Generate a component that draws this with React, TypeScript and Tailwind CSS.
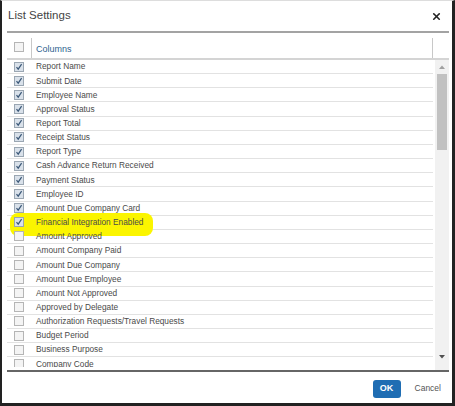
import { X } from "lucide-react";

const columns: [string, boolean][] = [
  ["Report Name", true],
  ["Submit Date", true],
  ["Employee Name", true],
  ["Approval Status", true],
  ["Report Total", true],
  ["Receipt Status", true],
  ["Report Type", true],
  ["Cash Advance Return Received", true],
  ["Payment Status", true],
  ["Employee ID", true],
  ["Amount Due Company Card", true],
  ["Financial Integration Enabled", true],
  ["Amount Approved", false],
  ["Amount Company Paid", false],
  ["Amount Due Company", false],
  ["Amount Due Employee", false],
  ["Amount Not Approved", false],
  ["Approved by Delegate", false],
  ["Authorization Requests/Travel Requests", false],
  ["Budget Period", false],
  ["Business Purpose", false],
  ["Company Code", false],
];

function Box({ checked }: { checked: boolean }) {
  return (
    <span
      className={
        checked
          ? "flex h-[10px] w-[10px] items-center justify-center border border-[#9aa6b2] bg-[#d9e1ea]"
          : "flex h-[10px] w-[10px] items-center justify-center border border-[#b5b5b5] bg-[#f4f4f4]"
      }
    >
      {checked && (
        <svg width="8" height="8" viewBox="0 0 8 8">
          <path d="M1.5 4.2 L3.2 6.2 L6.6 1.2" fill="none" stroke="#3b5878" strokeWidth="1.2" />
        </svg>
      )}
    </span>
  );
}

export default function App() {
  return (
    <div
      className="relative flex h-[406px] w-[455px] flex-col overflow-hidden border-b-[3px] border-l-[2px] border-r-[3px] border-t border-b-[#222] border-l-[#222] border-r-[#222] border-t-[#ddd] bg-white text-[#333]"
      style={{ fontFamily: "Arial, 'Liberation Sans', sans-serif" }}
    >
      <div className="flex h-[30px] items-center justify-between pl-[6px] pr-[10px]">
        <span className="text-[11.5px] text-[#444]">List Settings</span>
        <X size={11} strokeWidth={3.5} className="text-[#222]" />
      </div>
      <div className="ml-[5px] mr-[3px] h-[2px] bg-[#a3a3a3]" />

      <div className="ml-[5px] mr-[3px] mt-[5px] flex flex-1 flex-col">
        <div className="flex h-[22px] border-b-2 border-[#d4d4d4]">
          <div className="flex w-[24px] items-start justify-center pt-[4px]">
            <Box checked={false} />
          </div>
          <div className="flex flex-1 items-end border-l border-r border-[#c8c8c8] pb-[2px] pl-[4px]">
            <span className="text-[9px] text-[#2f5f8f]">Columns</span>
          </div>
          <div className="w-[16px]" />
        </div>

        <div className="relative flex h-[312px] border-b-2 border-[#666]">
          <div className="mb-[3px] flex-1 overflow-hidden">
            {columns.map(([name, checked]) => (
              <div
                key={name}
                className="relative flex h-[14.17px] items-center border-b border-[#e2e2e2]"
              >
                {name === "Financial Integration Enabled" && (
                  <div className="absolute left-[3px] top-[-3px] h-[23px] w-[143px] rounded-[8px] bg-[#fbf500]" />
                )}
                <div className="relative flex w-[24px] justify-center">
                  <Box checked={checked} />
                </div>
                <span className="relative pl-[5px] text-[8.3px] text-[#4a4a4a]">{name}</span>
              </div>
            ))}
          </div>
          <div className="ml-[2px] flex w-[14px] flex-col items-center bg-[#f1f1f1]">
            <svg width="8" height="6" viewBox="0 0 8 6" className="mt-[4px]">
              <path d="M1 5 L4 1.5 L7 5 Z" fill="#a0a0a0" />
            </svg>
            <div className="mt-[4px] h-[76px] w-[10px] bg-[#c1c1c1]" />
            <div className="flex-1" />
            <svg width="8" height="6" viewBox="0 0 8 6" className="mb-[10px]">
              <path d="M1 1 L4 4.5 L7 1 Z" fill="#505050" />
            </svg>
          </div>
        </div>

        <div className="flex flex-1 items-center justify-end gap-[14px] pr-[8px] pt-[2px]">
          <button className="h-[18px] w-[28px] rounded-[3px] bg-[#1f6db3] text-[9px] font-bold text-white">
            OK
          </button>
          <span className="text-[8.5px] text-[#555]">Cancel</span>
        </div>
      </div>
    </div>
  );
}
